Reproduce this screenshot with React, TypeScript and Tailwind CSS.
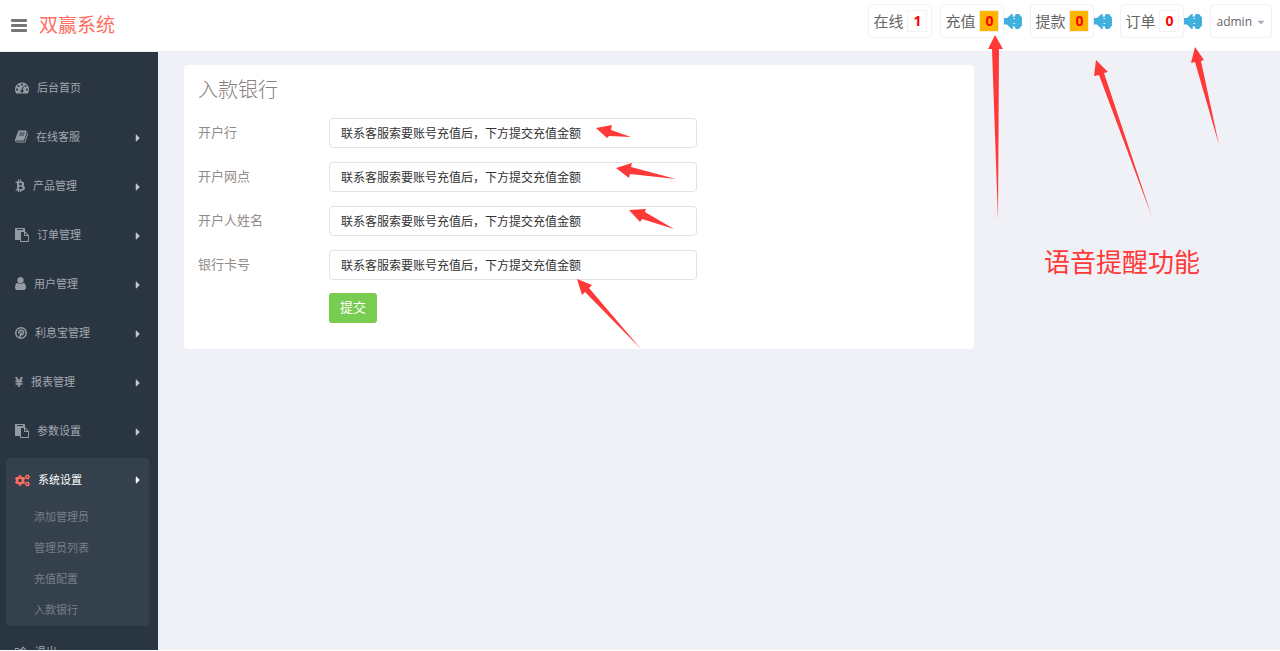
import { useState } from 'react';
import type { ReactNode } from 'react';
import { FaCaretDown, FaCaretRight, FaCogs, FaRegShareSquare, FaYenSign } from 'react-icons/fa';

const DASHBOARD = 'M384 1152q0-53-37.5-90.5t-90.5-37.5-90.5 37.5-37.5 90.5 37.5 90.5 90.5 37.5 90.5-37.5 37.5-90.5zm192-448q0-53-37.5-90.5t-90.5-37.5-90.5 37.5-37.5 90.5 37.5 90.5 90.5 37.5 90.5-37.5 37.5-90.5zm428 481l101-382q6-26-7.5-48.5t-38.5-29.5-48 6.5-30 39.5l-101 382q-60 5-107 43.5t-63 98.5q-20 77 20 146t117 89 146-20 89-117q16-60-6-117t-72-91zm660-33q0-53-37.5-90.5t-90.5-37.5-90.5 37.5-37.5 90.5 37.5 90.5 90.5 37.5 90.5-37.5 37.5-90.5zm-640-640q0-53-37.5-90.5t-90.5-37.5-90.5 37.5-37.5 90.5 37.5 90.5 90.5 37.5 90.5-37.5 37.5-90.5zm448 192q0-53-37.5-90.5t-90.5-37.5-90.5 37.5-37.5 90.5 37.5 90.5 90.5 37.5 90.5-37.5 37.5-90.5zm320 448q0 261-141 483-19 29-54 29h-1402q-35 0-54-29-141-221-141-483 0-182 71-348t191-286 286-191 348-71 348 71 286 191 191 286 71 348z';
const BOOK = 'M1703 478q40 57 18 129l-275 906q-19 64-76.5 107.5t-122.5 43.5h-923q-77 0-148.5-53.5t-99.5-131.5q-24-67-2-127 0-4 3-27t4-37q1-8-3-21.5t-3-19.5q2-11 8-21t16.5-23.5 16.5-23.5q23-38 45-91.5t30-91.5q3-10 .5-30t-.5-28q3-11 17-28t17-23q21-36 42-92t25-90q1-9-2.5-32t.5-28q4-13 22-30.5t22-22.5q19-26 42.5-84.5t27.5-96.5q1-8-3-25.5t-2-26.5q2-8 9-18t18-23 17-21q8-12 16.5-30.5t15-35 16-36 19.5-32 26.5-23.5 36-11.5 47.5 5.5l-1 3q38-9 51-9h761q74 0 114 56t18 130l-274 906q-36 119-71.5 153.5t-128.5 34.5h-869q-27 0-38 15-11 16-1 43 24 70 144 70h923q29 0 56-15.5t35-41.5l300-987q7-22 5-57 38 15 59 43zm-1064 2q-4 13 2 22.5t20 9.5h608q13 0 25.5-9.5t16.5-22.5l21-64q4-13-2-22.5t-20-9.5h-608q-13 0-25.5 9.5t-16.5 22.5zm-83 256q-4 13 2 22.5t20 9.5h608q13 0 25.5-9.5t16.5-22.5l21-64q4-13-2-22.5t-20-9.5h-608q-13 0-25.5 9.5t-16.5 22.5z';
const BITCOIN = 'M1217 651q18 182-131 258 117 28 175 103t45 214q-7 71-32.5 125t-64.5 89-97 58.5-121.5 34.5-145.5 15v255h-154v-251q-80 0-122-1v252h-154v-255q-18 0-54-.5t-55-.5h-200l31-183h111q50 0 58-51v-402h16q-6-1-16-1v-287q-13-68-89-68h-111v-164l212 1q64 0 97-1v-252h154v247q82-2 122-2v-245h154v252q79 7 140 22.5t113 45 82.5 78 36.5 114.5zm-215 545q0-36-15-64t-37-46-57.5-30.5-65.5-18.5-74-9-69-3-64.5 1-47.5 1v338q8 0 37 .5t48 .5 53-1.5 58.5-4 57-8.5 55.5-14 47.5-21 39.5-30 24.5-40 9.5-51zm-71-476q0-33-12.5-58.5t-30.5-42-48-28-55-16.5-61.5-8-58-2.5-54 1-39.5.5v307q5 0 34.5.5t46.5 0 50-2 55-5.5 51.5-11 48.5-18.5 37-27 27-38.5 9-51z';
const PASTE = 'M768 1664h896v-640h-416q-40 0-68-28t-28-68v-416h-384v1152zm256-1440v-64q0-13-9.5-22.5t-22.5-9.5h-704q-13 0-22.5 9.5t-9.5 22.5v64q0 13 9.5 22.5t22.5 9.5h704q13 0 22.5-9.5t9.5-22.5zm256 672h299l-299-299v299zm512 128v672q0 40-28 68t-68 28h-960q-40 0-68-28t-28-68v-160h-544q-40 0-68-28t-28-68v-1344q0-40 28-68t68-28h1088q40 0 68 28t28 68v328q21 13 36 28l408 408q28 28 48 76t20 88z';
const USER = 'M1536 1399q0 109-62.5 187t-150.5 78h-854q-88 0-150.5-78t-62.5-187q0-85 8.5-160.5t31.5-152 58.5-131 94-89 134.5-34.5q131 128 313 128t313-128q76 0 134.5 34.5t94 89 58.5 131 31.5 152 8.5 160.5zm-256-887q0 159-112.5 271.5t-271.5 112.5-271.5-112.5-112.5-271.5 112.5-271.5 271.5-112.5 271.5 112.5 112.5 271.5z';

const Glyph = ({ d, viewBox, className }: { d: string; viewBox: string; className: string }) => (
  <svg viewBox={viewBox} className={className} fill="currentColor" aria-hidden="true">
    <path d={d} />
  </svg>
);

const PinterestIcon = () => (
  <svg viewBox="0 0 24 24" className="size-3" fill="none" stroke="currentColor" aria-hidden="true">
    <circle cx="12" cy="12" r="10.5" strokeWidth="3" />
    <path d="M8 13.500C6 9 9 6.500 12.500 6.500c3.500 0 5 2.200 4.500 5-.5 3.200-3.800 5-5.400 2.800M12.500 9.500 9.500 21" strokeWidth="3" />
  </svg>
);

const SpeakerIcon = () => (
  <svg viewBox="0 0 18 16" className="h-4 w-[18px] shrink-0" aria-hidden="true">
    <path
      d="M0 5h3l4.500-4H9v2.500h2V2l1-1h3l3 3.500v8L15 16h-3l-1-1v-1.500H9V16H7.500L3 11.500H0z"
      fill="#41b0dc"
    />
    <path d="M9.500 5.500h1.500M9.500 10.500h1.500M9 1.500v2M9 13.500v2" stroke="#e8f5fb" />
  </svg>
);

interface MenuItem {
  label: string;
  icon: ReactNode;
  hasChildren: boolean;
}

const MENU: MenuItem[] = [
  { label: '后台首页', icon: <Glyph d={DASHBOARD} viewBox="0 128 1792 1536" className="h-[13px] w-3.5" />, hasChildren: false },
  { label: '在线客服', icon: <Glyph d={BOOK} viewBox="64 128 1664 1536" className="h-[13px] w-[13px]" />, hasChildren: true },
  { label: '产品管理', icon: <Glyph d={BITCOIN} viewBox="40 128 1280 1536" className="h-[13px] w-2.5" />, hasChildren: true },
  { label: '订单管理', icon: <Glyph d={PASTE} viewBox="0 0 1792 1792" className="size-3.5" />, hasChildren: true },
  { label: '用户管理', icon: <Glyph d={USER} viewBox="256 128 1280 1536" className="h-[13px] w-[11px]" />, hasChildren: true },
  { label: '利息宝管理', icon: <PinterestIcon />, hasChildren: true },
  { label: '报表管理', icon: <FaYenSign className="h-3 w-2 stroke-current stroke-[24px]" />, hasChildren: true },
  { label: '参数设置', icon: <Glyph d={PASTE} viewBox="0 0 1792 1792" className="size-3.5" />, hasChildren: true },
];

const SUB_MENU = ['添加管理员', '管理员列表', '充值配置', '入款银行'];

const COUNTERS = [
  { label: '在线', count: 1, alert: false, sound: false },
  { label: '充值', count: 0, alert: true, sound: true },
  { label: '提款', count: 0, alert: true, sound: true },
  { label: '订单', count: 0, alert: false, sound: true },
];

const FIELDS = [
  { id: 'bank', label: '开户行' },
  { id: 'branch', label: '开户网点' },
  { id: 'holder', label: '开户人姓名' },
  { id: 'card', label: '银行卡号' },
];

const HINT = '联系客服索要账号充值后，下方提交充值金额';

const Header = () => (
  <header className="flex h-[52px] shrink-0 items-start justify-between border-b border-[#eff0f6] bg-white pr-2 pl-[11px]">
    <div className="flex h-[51px] items-center gap-3">
      <button aria-label="菜单" className="text-[#767676]">
        <svg viewBox="0 0 16 14" className="h-3.5 w-4" fill="currentColor" aria-hidden="true">
          <rect width="16" height="3" rx="1" />
          <rect y="5" width="16" height="3" rx="1" />
          <rect y="10" width="16" height="3" rx="1" />
        </svg>
      </button>
      <a href="#" className="text-[19px] text-[#ff6c60]">双赢系统</a>
    </div>
    <div className="flex gap-2 pt-1">
      {COUNTERS.map(item => (
        <div key={item.label} className="flex items-center">
          <a href="#" className="flex h-[34px] items-center gap-1 rounded border border-[#f0f0f8] px-1 text-[15px] text-[#666]">
            {item.label}
            <span
              className={`flex h-[22px] w-5 items-center justify-center border text-sm font-bold text-[#f00] ${
                item.alert ? 'border-[#f3efe0] bg-[#ffb400]' : 'border-[#f2f2f5]'
              }`}
            >
              {item.count}
            </span>
          </a>
          {item.sound && <SpeakerIcon />}
        </div>
      ))}
      <button className="flex h-[34px] items-center gap-1 rounded border border-[#f0f0f8] px-[5px] pt-0.5 text-xs text-[#666]">
        admin
        <FaCaretDown className="size-2.5 text-[#a4aab8]" />
      </button>
    </div>
  </header>
);

const Sidebar = () => (
  <aside className="w-[158px] shrink-0 overflow-hidden bg-[#2a3542] px-1.5 pt-3 text-[11px]">
    <nav>
      {MENU.map(item => (
        <a key={item.label} href="#" className="flex h-[49px] items-center px-2 pl-[9px] text-[#a2a7ae]">
          <span className="mr-2 pb-0.5 text-[#959ba3]">{item.icon}</span>
          {item.label}
          {item.hasChildren && <FaCaretRight className="ml-auto size-3 text-[#c4c7ca]" />}
        </a>
      ))}
      <div className="mt-0.5 mr-[3px] rounded bg-[#35404d]">
        <a href="#" className="flex h-11 items-center pr-[5px] pl-[9px] text-white">
          <FaCogs className="mr-2 size-[15px] text-[#ff6c60]" />
          系统设置
          <FaCaretRight className="ml-auto size-3" />
        </a>
        {SUB_MENU.map(label => (
          <a key={label} href="#" className="flex h-[31px] items-center pl-7 text-[#777f89]">{label}</a>
        ))}
      </div>
      <a href="#" className="flex h-[52px] items-center pl-[9px] text-[#a2a7ae]">
        <FaRegShareSquare className="mr-2 size-3" />
        退出
      </a>
    </nav>
  </aside>
);

const BankForm = () => {
  const [values, setValues] = useState<Record<string, string>>({ bank: HINT, branch: HINT, holder: HINT, card: HINT });

  return (
    <form onSubmit={e => e.preventDefault()} className="w-3/4 max-w-[790px] rounded bg-white px-3.5 pt-2.5 pb-[26px]">
      <h1 className="mb-3.5 text-xl leading-[29px] font-light text-[#87807c]">入款银行</h1>
      <div className="flex flex-col gap-3.5">
        {FIELDS.map(field => (
          <div key={field.id} className="flex h-[30px] items-center">
            <label htmlFor={field.id} className="w-[131px] shrink-0 text-[13px] text-[#918b88]">{field.label}</label>
            <input
              id={field.id}
              value={values[field.id]}
              onChange={e => setValues({ ...values, [field.id]: e.target.value })}
              className="h-[30px] w-[368px] rounded border border-[#e2e2e4] px-[11px] text-xs text-[#333] outline-none"
            />
          </div>
        ))}
      </div>
      <button type="submit" className="mt-[13px] ml-[131px] h-[30px] rounded-[3px] bg-[#78cd51] px-[11px] text-[13px] text-white">提交</button>
    </form>
  );
};

// Red callouts pointing at the form fields and the sound toggles
const ARROWS = [
  '596,128 612,125 611,130 631,137 609,136 607,138',
  '616,168 632,163 631,167 676,179 630,174 629,178',
  '629,210 646,209 645,212 674,229 642,219 640,222',
  '577,279 592,285 589,288 641,349 585,292 582,295',
  '995,35 1003,49 999,49 998,220 992,49 988,49',
  '1096,60 1108,72 1104,73 1152,217 1099,75 1094,76',
  '1195,47 1204,60 1201,61 1219,145 1195,62 1191,63',
];

const Callouts = () => (
  <div className="pointer-events-none absolute inset-0 overflow-hidden">
    <svg width="1280" height="400" className="max-w-none" fill="#ff3838" aria-hidden="true">
      {ARROWS.map(points => (
        <polygon key={points} points={points} />
      ))}
    </svg>
    <p className="absolute top-[243px] left-[1044px] text-[26px] leading-[38px] whitespace-nowrap text-[#ff3838]">语音提醒功能</p>
  </div>
);

export default function App() {
  return (
    <div className="relative flex h-screen flex-col overflow-hidden bg-white pb-px font-['Open_Sans','Noto_Sans_CJK_SC',sans-serif]">
      <Header />
      <div className="flex min-h-0 flex-1">
        <Sidebar />
        <main className="min-w-0 flex-1 bg-[#f0f1f6] pt-[13px] pr-5 pl-[26px]">
          <BankForm />
        </main>
      </div>
      <Callouts />
    </div>
  );
}
